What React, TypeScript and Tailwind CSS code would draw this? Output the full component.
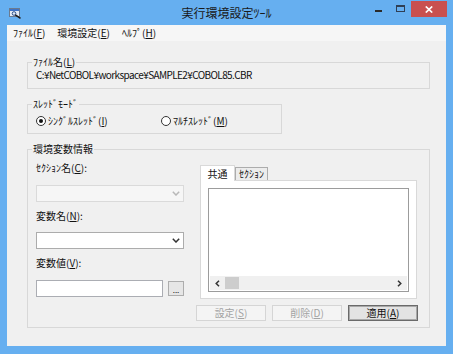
import React from "react";

const U = ({ c }: { c: string }) => (
  <span className="underline underline-offset-[1px] decoration-[1px]">{c}</span>
);

const Chevron = ({ color }: { color: string }) => (
  <svg width="8" height="5" viewBox="0 0 8 5">
    <polyline points="0.8,0.8 4,4 7.2,0.8" fill="none" stroke={color} strokeWidth="1.5" />
  </svg>
);

const AppIcon = () => (
  <svg width="13" height="11" viewBox="0 0 13 11">
    <rect x="0.5" y="0.5" width="10" height="8" fill="#e4ebf5" stroke="#6b7a8f" />
    <rect x="1" y="1" width="9" height="2" fill="#3f73c6" />
    <circle cx="5" cy="5.5" r="1.8" fill="none" stroke="#2a4f8a" strokeWidth="1" />
    <line x1="6.3" y1="6.8" x2="11.5" y2="10.3" stroke="#1b1b1b" strokeWidth="1.6" />
  </svg>
);

function Radio({ checked }: { checked: boolean }) {
  return (
    <div className="flex h-[10px] w-[10px] items-center justify-center rounded-full border border-[#333333] bg-white">
      {checked && <div className="h-[4px] w-[4px] rounded-full bg-[#111111]" />}
    </div>
  );
}

export default function App() {
  return (
    <div className="h-[354px] w-[453px] overflow-hidden bg-[#66aff0] font-['Noto_Sans_CJK_JP',sans-serif] text-[10px] text-[#111111]">
      {/* Title bar */}
      <div className="grid h-[25px] grid-cols-[1fr_auto_1fr]">
        <div className="pl-[9px] pt-[8px]">
          <AppIcon />
        </div>
        <div className="pt-[5px] text-[12px] leading-[16px] text-[#1a1a1a]">実行環境設定ﾂｰﾙ</div>
        <div className="flex items-start justify-end pr-[6px]">
          <div className="mt-[10px] h-[2px] w-[7px] bg-[#2a2a2a]" />
          <div className="ml-[14px] mt-[5px] h-[7px] w-[9px] border border-t-2 border-[#2f3f55]" />
          <div className="ml-[6px] mt-[1px] flex h-[16px] w-[36px] items-center justify-center bg-[#c9504f]">
            <svg width="8" height="7" viewBox="0 0 8 7">
              <line x1="0.8" y1="0.5" x2="7.2" y2="6.5" stroke="#ffffff" strokeWidth="1.7" />
              <line x1="7.2" y1="0.5" x2="0.8" y2="6.5" stroke="#ffffff" strokeWidth="1.7" />
            </svg>
          </div>
        </div>
      </div>

      {/* Client */}
      <div className="mx-[7px] flex h-[321px] flex-col bg-[#f0f0f0]">
        {/* Menu bar */}
        <div className="flex h-[16px] items-center gap-[12px] bg-[#f6f6f6] pl-[6px] leading-[14px]">
          <span>
            ﾌｧｲﾙ(<U c="F" />)
          </span>
          <span>
            環境設定(<U c="E" />)
          </span>
          <span>
            ﾍﾙﾌﾟ(<U c="H" />)
          </span>
        </div>

        <div className="flex flex-col px-[20px]">
          {/* File name group */}
          <fieldset className="mt-[15px] w-[403px] border border-[#d8d8d8] pb-[7px] pl-[8px]">
            <legend className="ml-[-4px] px-[1px] leading-[12px]">
              ﾌｧｲﾙ名(<U c="L" />)
            </legend>
            <div className="mt-[1px] leading-[12px] tracking-[-0.6px]">C:¥NetCOBOL¥workspace¥SAMPLE2¥COBOL85.CBR</div>
          </fieldset>

          {/* Thread mode group */}
          <fieldset className="mt-[9px] w-[255px] border border-[#d8d8d8] pb-[5px] pl-[8px]">
            <legend className="ml-[-4px] px-[1px] leading-[12px]">ｽﾚｯﾄﾞﾓｰﾄﾞ</legend>
            <div className="mt-[4px] flex h-[14px] items-center leading-[14px]">
              <div className="flex w-[125px] items-center gap-[2px]">
                <Radio checked />
                <span>
                  ｼﾝｸﾞﾙｽﾚｯﾄﾞ(<U c="I" />)
                </span>
              </div>
              <div className="flex items-center gap-[2px]">
                <Radio checked={false} />
                <span>
                  ﾏﾙﾁｽﾚｯﾄﾞ(<U c="M" />)
                </span>
              </div>
            </div>
          </fieldset>

          {/* Environment variable group */}
          <fieldset className="mt-[9px] w-[403px] border border-[#d8d8d8] pb-[6px] pl-[8px] pr-[11px]">
            <legend className="ml-[-4px] px-[1px] leading-[12px]">環境変数情報</legend>
            <div className="flex items-start">
              {/* Left column */}
              <div className="flex w-[148px] flex-col">
                <div className="mt-[6px] leading-[14px]">
                  ｾｸｼｮﾝ名(<U c="C" />):
                </div>
                <div className="mt-[10px] flex h-[17px] items-center justify-end border border-[#dadada] bg-[#f6f6f6] pr-[3px]">
                  <Chevron color="#b8b8b8" />
                </div>
                <div className="mt-[7px] leading-[14px]">
                  変数名(<U c="N" />):
                </div>
                <div className="mt-[9px] flex h-[17px] items-center justify-end border border-[#acacac] bg-white pr-[3px]">
                  <Chevron color="#333333" />
                </div>
                <div className="mt-[7px] leading-[14px]">
                  変数値(<U c="V" />):
                </div>
                <div className="mt-[10px] flex items-start">
                  <div className="h-[17px] w-[127px] border border-[#abadb3] bg-white" />
                  <div className="ml-[5px] mt-[1px] flex h-[15px] w-[16px] items-end justify-center border border-[#adadad] bg-[#e6e6e6] pb-[1px] text-[8px] leading-[8px]">
                    ...
                  </div>
                </div>
              </div>

              {/* Right column: tab control */}
              <div className="ml-[16px] mt-[10px] flex w-[217px] flex-col">
                <div className="flex h-[15px] items-end">
                  <div className="relative z-10 -mb-[1px] flex h-[16px] w-[35px] items-center justify-center border border-b-0 border-[#d9d9d9] bg-white leading-[14px]">
                    共通
                  </div>
                  <div className="flex h-[13px] w-[33px] items-center justify-center border border-b-0 border-[#acacac] bg-[#ececec] leading-[12px]">
                    ｾｸｼｮﾝ
                  </div>
                </div>
                <div className="flex h-[119px] flex-col border border-[#d9d9d9] bg-white pb-[6px] pl-[7px] pr-[7px] pt-[7px]">
                  <div className="flex h-[104px] flex-col justify-end border border-[#9c9c9c] bg-white p-[1px]">
                    <div className="flex h-[14px] items-center bg-[#f0f0f0]">
                      <div className="flex w-[15px] items-center justify-center">
                        <svg width="5" height="7" viewBox="0 0 5 7">
                          <polyline points="4,0.7 1.2,3.5 4,6.3" fill="none" stroke="#333333" strokeWidth="1.5" />
                        </svg>
                      </div>
                      <div className="h-[12px] w-[14px] bg-[#cdcdcd]" />
                      <div className="flex-1" />
                      <div className="flex w-[15px] items-center justify-center">
                        <svg width="5" height="7" viewBox="0 0 5 7">
                          <polyline points="1,0.7 3.8,3.5 1,6.3" fill="none" stroke="#333333" strokeWidth="1.5" />
                        </svg>
                      </div>
                    </div>
                  </div>
                </div>
              </div>
            </div>

            {/* Buttons */}
            <div className="mt-[6px] flex justify-end gap-[6px]">
              <div className="flex h-[16px] w-[70px] items-center justify-center border border-[#d5d5d5] bg-[#f4f4f4] leading-[14px] text-[#a3a3a3]">
                設定(<U c="S" />)
              </div>
              <div className="flex h-[16px] w-[70px] items-center justify-center border border-[#d5d5d5] bg-[#f4f4f4] leading-[14px] text-[#a3a3a3]">
                削除(<U c="D" />)
              </div>
              <div className="flex h-[16px] w-[70px] items-center justify-center border border-[#6a6a6a] bg-[#e3e3e3] leading-[14px] shadow-[inset_0_0_0_1px_#a8a8a8]">
                適用(<U c="A" />)
              </div>
            </div>
          </fieldset>
        </div>
      </div>
    </div>
  );
}
